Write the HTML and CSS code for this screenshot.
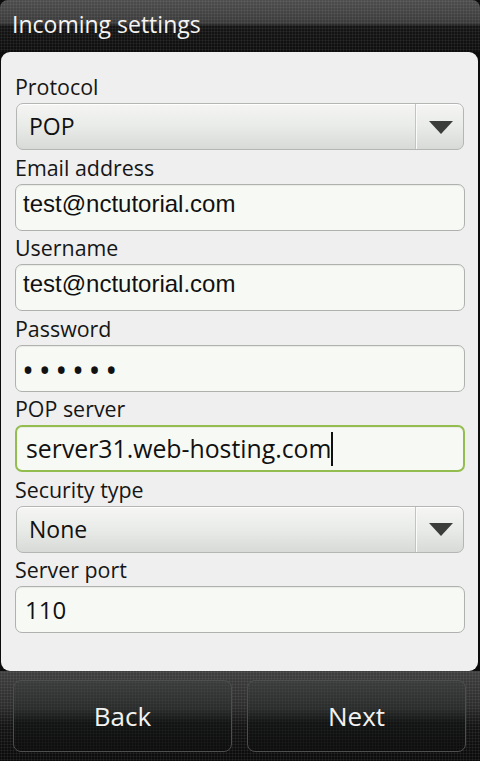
FILE: index.html
```html
<!DOCTYPE html>
<html>
<head>
<meta charset="utf-8">
<link rel="stylesheet" href="styles.css">
</head>
<body>
<div class="screen">
  <header class="titlebar">Incoming settings</header>
  <main class="panel">
    <div class="field">
      <div class="label">Protocol</div>
      <div class="spinner"><span class="spin-text">POP</span><span class="spin-arrow"><svg width="24" height="14" viewBox="0 0 24 14"><path d="M0 0 H24 L12 13 Z" fill="#3a3d39"/></svg></span></div>
    </div>
    <div class="field">
      <div class="label">Email address</div>
      <div class="input sans2">test@nctutorial.com</div>
    </div>
    <div class="field">
      <div class="label">Username</div>
      <div class="input sans2">test@nctutorial.com</div>
    </div>
    <div class="field">
      <div class="label">Password</div>
      <div class="input dots">••••••</div>
    </div>
    <div class="field">
      <div class="label">POP server</div>
      <div class="input focused">server31.web-hosting.com<span class="caret"></span></div>
    </div>
    <div class="field">
      <div class="label">Security type</div>
      <div class="spinner"><span class="spin-text">None</span><span class="spin-arrow"><svg width="24" height="14" viewBox="0 0 24 14"><path d="M0 0 H24 L12 13 Z" fill="#3a3d39"/></svg></span></div>
    </div>
    <div class="field">
      <div class="label">Server port</div>
      <div class="input">110</div>
    </div>
  </main>
  <footer class="bottombar">
    <div class="btn">Back</div>
    <div class="btn">Next</div>
  </footer>
</div>
</body>
</html>
```

FILE: styles.css
```css
* { box-sizing: border-box; }
html, body { margin: 0; padding: 0; }
body {
  width: 480px;
  height: 761px;
  overflow: hidden;
  background: #0c0c0c;
  font-family: "Open Sans", "DejaVu Sans", sans-serif;
}
.screen {
  display: flex;
  flex-direction: column;
  height: 761px;
}
.titlebar {
  height: 52px;
  line-height: 48px;
  padding: 0 0 4px 12px;
  font-size: 23px;
  color: #f4f4f4;
  border-radius: 8px 8px 0 0;
  background-color: #111;
  background-image:
    radial-gradient(circle, rgba(255,255,255,0.10) 0.8px, transparent 1.2px),
    linear-gradient(to bottom, #4d4d4d 0%, #3a3a3a 45%, #151515 50%, #0e0e0e 100%);
  background-size: 3px 3px, 100% 100%;
}
.panel {
  margin: 0 2px 0 1px;
  height: 619px;
  background: #efefef;
  border-radius: 9px;
  padding: 21px 13px 0 14px;
  display: flex;
  flex-direction: column;
  gap: 3.5px;
}
.field {
  display: flex;
  flex-direction: column;
}
.label {
  height: 28px;
  line-height: 28px;
  margin-bottom: 2px;
  font-size: 21.4px;
  color: #161616;
  white-space: nowrap;
}
.input {
  height: 47px;
  line-height: 45px;
  padding-left: 9px;
  font-size: 24px;
  color: #111;
  background: #f7faf4;
  border: 1px solid #aeb1ad;
  border-radius: 7px;
  box-shadow: inset 0 1px 1px rgba(0,0,0,0.06);
  white-space: nowrap;
  overflow: hidden;
}
.input.sans2 {
  font-family: "Liberation Sans", Arial, sans-serif;
  line-height: 37px;
  padding-left: 7px;
}
.input.dots {
  letter-spacing: 4.6px;
  padding-left: 6px;
  font-size: 32px;
  line-height: 48px;
}
.input.focused {
  border: 2px solid #93bd4e;
  line-height: 43px;
  padding-left: 9px;
  font-size: 24.8px;
}
.caret {
  display: inline-block;
  width: 2px;
  height: 34px;
  background: #111;
  vertical-align: -8px;
  margin-left: 0;
}
.spinner {
  margin: 0 1px;
  height: 47px;
  display: flex;
  border: 1px solid #b3b6b2;
  border-radius: 7px;
  background: linear-gradient(to bottom, #f5f6f4 0%, #e9ebe8 50%, #d8dad7 100%);
  box-shadow: inset 0 1px 0 #fff;
}
.spin-text {
  flex: 1;
  line-height: 45px;
  padding-left: 12px;
  font-size: 23px;
  color: #111;
  border-right: 1px solid #c2c4c1;
  box-shadow: 1px 0 0 #fbfbfb;
}
.spin-arrow {
  width: 47px;
  display: flex;
  align-items: center;
  justify-content: center;
  padding-left: 2px;
  padding-top: 2px;
}
.bottombar {
  flex: 1;
  display: flex;
  gap: 15px;
  padding: 9px 14px 9px 13px;
  background-color: #101010;
  background-image:
    radial-gradient(circle, rgba(255,255,255,0.10) 0.8px, transparent 1.2px),
    linear-gradient(to bottom, #3e3e3e 0%, #2c2c2c 40%, #141414 60%, #0b0b0b 100%);
  background-size: 3px 3px, 100% 100%;
}
.btn {
  flex: 1;
  height: 72px;
  line-height: 70px;
  text-align: center;
  font-size: 26px;
  color: #f2f2f2;
  border: 1px solid #4d4f4e;
  border-radius: 8px;
  background-image:
    radial-gradient(circle, rgba(255,255,255,0.05) 0.8px, transparent 1.2px),
    linear-gradient(to bottom, #3b3d3c 0%, #2a2c2b 40%, #121413 60%, #0c0d0c 100%);
  background-size: 3px 3px, 100% 100%;
}
```
